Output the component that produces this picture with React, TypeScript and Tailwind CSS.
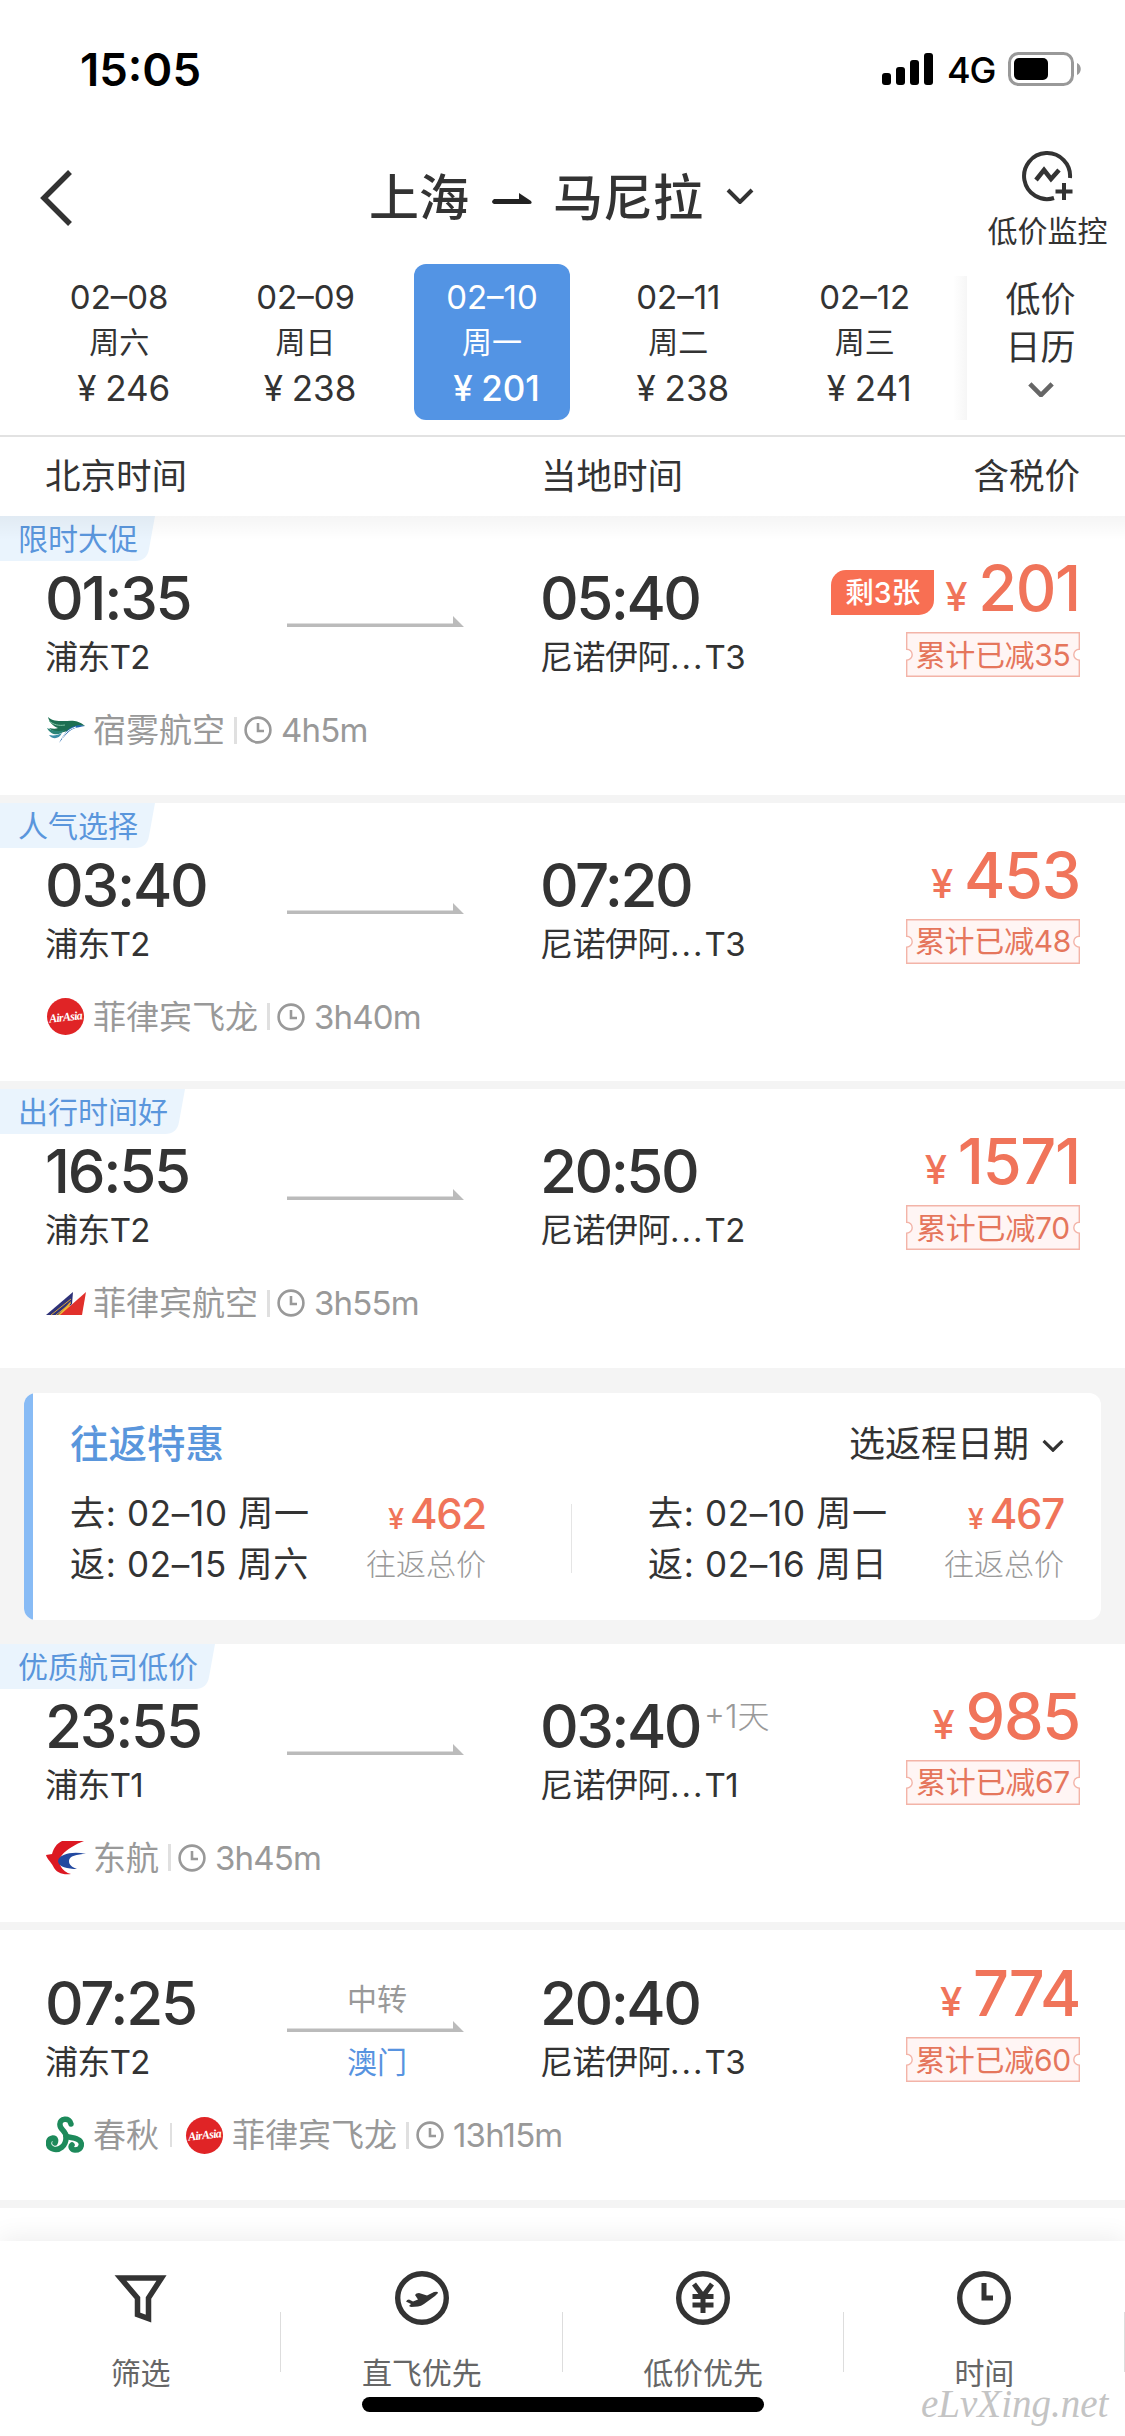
import React from 'react';
import clsx from 'clsx';

type LogoName = 'cebu' | 'airasia' | 'pal' | 'eastern' | 'spring';

interface Flight {
  tag?: string;
  tagWidth?: number;
  depart: string;
  from: string;
  arrive: string;
  to: string;
  nextDay?: string;
  via?: string;
  left?: string;
  price: string;
  saved: string;
  airlines: { logo: LogoName; name: string }[];
  duration: string;
}

const days = [
  { date: '02–08', week: '周六', price: '246' },
  { date: '02–09', week: '周日', price: '238' },
  { date: '02–10', week: '周一', price: '201', active: true },
  { date: '02–11', week: '周二', price: '238' },
  { date: '02–12', week: '周三', price: '241' },
];

const topFlights: Flight[] = [
  {
    tag: '限时大促', tagWidth: 155,
    depart: '01:35', from: '浦东T2', arrive: '05:40', to: 'T3',
    left: '剩3张', price: '201', saved: '35',
    airlines: [{ logo: 'cebu', name: '宿雾航空' }], duration: '4h5m',
  },
  {
    tag: '人气选择', tagWidth: 155,
    depart: '03:40', from: '浦东T2', arrive: '07:20', to: 'T3',
    price: '453', saved: '48',
    airlines: [{ logo: 'airasia', name: '菲律宾飞龙' }], duration: '3h40m',
  },
  {
    tag: '出行时间好', tagWidth: 185,
    depart: '16:55', from: '浦东T2', arrive: '20:50', to: 'T2',
    price: '1571', saved: '70',
    airlines: [{ logo: 'pal', name: '菲律宾航空' }], duration: '3h55m',
  },
];

const moreFlights: Flight[] = [
  {
    tag: '优质航司低价', tagWidth: 215,
    depart: '23:55', from: '浦东T1', arrive: '03:40', to: 'T1', nextDay: '+1天',
    price: '985', saved: '67',
    airlines: [{ logo: 'eastern', name: '东航' }], duration: '3h45m',
  },
  {
    depart: '07:25', from: '浦东T2', arrive: '20:40', to: 'T3', via: '澳门',
    price: '774', saved: '60',
    airlines: [{ logo: 'spring', name: '春秋' }, { logo: 'airasia', name: '菲律宾飞龙' }],
    duration: '13h15m',
  },
];

const roundTrips = [
  { go: '02–10 周一', back: '02–15 周六', price: '462' },
  { go: '02–10 周一', back: '02–16 周日', price: '467' },
];

function Chevron({ className, width = 4 }: { className: string; width?: number }) {
  return (
    <svg viewBox="0 0 28 16" className={className} fill="none" stroke="currentColor" strokeWidth={width}>
      <path d="M2 2l12 12L26 2" />
    </svg>
  );
}

function Logo({ name }: { name: LogoName }) {
  switch (name) {
    case 'cebu':
      return (
        <svg viewBox="0 0 40 42" className="h-[42px] w-10">
          <path d="M2 8c4 4 9 4 15 4 8 0 14-2 22 5-7-1-12 1-16 4-6 4-15 3-20-2 4 1 7 1 9 0C7 17 3 13 2 8z" fill="#1d6f52" />
          <path d="M3 12c5 4 10 5 16 4" fill="none" stroke="#7fc4a4" strokeWidth="1" />
          <path d="M1 19c6 3 12 4 18 2-5 6-14 6-18-2z" fill="#2b8478" />
          <path d="M3 26c5 1 9 0 13-2-3 6-9 7-13 2z" fill="#3c8fa8" />
          <path d="M39 17c-8-2-15 1-19 6-3 4-5 7-7 11 5-6 9-12 14-14 4-2 8-2 12-3z" fill="#2166ae" />
          <path d="M30 18c-7 2-11 6-14 12" fill="none" stroke="#fff" strokeWidth="1" />
        </svg>
      );
    case 'airasia':
      return (
        <span className="flex h-[37px] w-10 items-center pl-[1px]">
          <span className="flex size-[37px] items-center justify-center rounded-full bg-[#e02426]">
            <span className="-rotate-6 font-['Liberation_Serif',serif] text-[12px] leading-none font-bold tracking-[-0.06em] text-white italic">
              AirAsia
            </span>
          </span>
        </span>
      );
    case 'pal':
      return (
        <svg viewBox="0 0 40 42" className="h-[42px] w-10">
          <path d="M0 33L27 10l-1 12-12 11z" fill="#2e3278" />
          <path d="M12 33l13-14-2 7-7 7z" fill="#f2b632" />
          <path d="M5 33l20-16M10 33l15-12" stroke="#d9a63c" strokeWidth="1" />
          <path d="M14 33l26-23-4 23z" fill="#e1302b" />
        </svg>
      );
    case 'eastern':
      return (
        <svg viewBox="0 0 40 42" className="h-[42px] w-10">
          <path d="M16 4h22c-8 3-17 8-22 14-6 7 0 17 9 19-8 1-15-1-18-8-2-4-6-7-7-11l6-1c2-6 4-10 10-13z" fill="#dc1822" />
          <path d="M40 17c-9 0-17 2-17 7 0 4 3 6 8 8-9 0-19-2-19-8 1-7 15-10 28-7z" fill="#2349a0" />
        </svg>
      );
    case 'spring':
      return (
        <svg viewBox="0 0 40 42" className="h-[42px] w-10" fill="none" stroke="#1d8a5b" strokeWidth="5.500" strokeLinecap="round">
          <path d="M25 10c-1-7-12-6-11 1 0 5 7 6 6 13 0 8-7 13-13 11-6-2-6-10 0-11 3 0 3 3 2 5" />
          <path d="M20 22c3 2 7 1 11 3 7 3 5 11-2 11-3 0-5-3-3-5" />
        </svg>
      );
  }
}

function ClockSmall() {
  return (
    <svg viewBox="0 0 28 28" className="size-7" fill="none" stroke="#999" strokeWidth="2.6">
      <circle cx="14" cy="14" r="12.4" />
      <path d="M14 7v8h6" />
    </svg>
  );
}

function Tag({ label, width }: { label: string; width: number }) {
  return (
    <div className="relative flex h-[45px] items-center pl-[18px]" style={{ width }}>
      <svg className="absolute inset-0" width={width} height="45" fill="#eaf4fd">
        <path d={`M0 0H${width}L${width - 6} 33Q${width - 8} 45 ${width - 20} 45H0z`} />
      </svg>
      <span className="relative pt-[2px] text-[30px] leading-[45px] whitespace-nowrap text-[#5a96dc]">{label}</span>
    </div>
  );
}

function Coupon({ amount }: { amount: string }) {
  return (
    <div className="relative mt-[13px] flex h-[45px] w-[174px] items-center justify-center">
      <svg className="absolute inset-0" width="174" height="45" viewBox="0 0 174 45" fill="#fff5f4" stroke="#f3b4a8" strokeWidth="1.4">
        <path d="M.7.7h172.600v16.500a5.500 5.500 0 0 0 0 11v16H.7v-16a5.500 5.500 0 0 0 0-11z" />
      </svg>
      <span className="relative pt-[1px] text-[30px] leading-[47px] tracking-[-0.01em] whitespace-nowrap text-[#e5765c]">
        累计已减{amount}
      </span>
    </div>
  );
}

function FlightCard({ flight }: { flight: Flight }) {
  return (
    <section className="bg-white pb-[15.500px]">
      {flight.tag ? <Tag label={flight.tag} width={flight.tagWidth!} /> : <div className="h-[36px]" />}
      <div className="flex h-[120px] pr-[45px] pl-[45px]">
        <div className="w-[242px]">
          <div className="h-[72px] text-[60px] leading-[74px] font-medium tracking-[-0.037em]">{flight.depart}</div>
          <div className="h-[48px] text-[33px] leading-[49px] tracking-[-0.02em]">{flight.from}</div>
        </div>
        <div className="flex w-[177px] flex-col items-center pt-[11px] text-[30px] leading-[44px]">
          <div className="h-[44px] pl-[3px] text-[#999]">{flight.via && '中转'}</div>
          <svg viewBox="0 0 177 11" className="h-[11px] w-[177px]" fill="#bbb">
            <path d="M0 7.500h166V0l11 11H0z" />
          </svg>
          <div className="mt-[8px] pl-[3px] text-[#5793e0]">{flight.via}</div>
        </div>
        <div className="ml-[76px] flex-1">
          <div className="flex h-[72px] text-[60px] leading-[74px] font-medium tracking-[-0.042em]">
            {flight.arrive}
            {flight.nextDay && (
              <span className="ml-[4px] text-[32px] leading-[56px] font-light tracking-normal text-[#999]">{flight.nextDay}</span>
            )}
          </div>
          <div className="h-[48px] text-[33px] leading-[49px] tracking-[-0.015em] whitespace-nowrap">
            尼诺伊阿<span className="tracking-[0.06em]">...</span>
            {flight.to}
          </div>
        </div>
        <div className="flex flex-col items-end">
          <div className="flex h-[58px] items-center pt-[5px]">
            {flight.left && (
              <span className="mr-[11px] h-[45px] rounded-tl-[15px] rounded-br-[15px] bg-[#f86f53] px-[14px] text-[28.500px] leading-[45px] font-medium whitespace-nowrap text-white">
                {flight.left}
              </span>
            )}
            <span className="flex items-baseline text-[63px] leading-[54px] font-medium tracking-[-0.02em] whitespace-nowrap text-[#f0745a]">
              <span className="w-[33px] text-[40px]">¥</span>
              {flight.price}
            </span>
          </div>
          <Coupon amount={flight.saved} />
        </div>
      </div>
      <div className="flex h-[98px] items-center pl-[46px] text-[33px] text-[#999]">
        {flight.airlines.map((a, i) => (
          <div key={a.name} className="flex items-center">
            {i > 0 && <span className="mr-[13px] h-[24px] w-[2px] bg-[#e0e0e0]" />}
            <Logo name={a.logo} />
            <span className={clsx('ml-[7px] leading-[46px]', i < flight.airlines.length - 1 ? 'mr-[11px]' : 'mr-[9px]')}>{a.name}</span>
          </div>
        ))}
        <span className="mr-[7px] h-[27px] w-[3px] bg-[#e0e0e0]" />
        <ClockSmall />
        <span className="ml-[9px] leading-[48px] tracking-[-0.025em]">{flight.duration}</span>
      </div>
    </section>
  );
}

function StatusBar() {
  return (
    <div className="flex h-[138px] items-center justify-between pr-[43px] pl-[80px] text-black">
      <span className="pt-[2px] text-[45.500px] leading-none font-semibold">15:05</span>
      <div className="flex items-center">
        <svg viewBox="0 0 51 32" className="h-8 w-[51px]">
          <rect x="0" y="20" width="9" height="12" rx="3" />
          <rect x="14" y="14" width="9" height="18" rx="3" />
          <rect x="28" y="7" width="9" height="25" rx="3" />
          <rect x="42" y="0" width="9" height="32" rx="3" />
        </svg>
        <span className="ml-[14px] w-[61px] pt-[2px] text-[36px] leading-none font-medium tracking-[-0.03em]">4G</span>
        <svg viewBox="0 0 74 34" className="h-[34px] w-[74px]">
          <rect x="1.500" y="1.500" width="63" height="31" rx="9" fill="none" stroke="#999" strokeWidth="3" />
          <rect x="6" y="6" width="34" height="22" rx="5" />
          <path d="M69 11c5 2 5 10 0 12z" fill="#999" />
        </svg>
      </div>
    </div>
  );
}

function TitleBar() {
  return (
    <header className="flex h-[126px] items-start pl-[39px]">
      <svg viewBox="0 0 34 56" className="mt-[32px] h-[56px] w-[34px]" fill="none" stroke="#333" strokeWidth="5.500">
        <path d="M31 2L5 28l26 26" />
      </svg>
      <div className="mt-[30px] ml-[296px] flex h-[60px] w-[620px] items-center text-[50px] leading-[60px] font-medium">
        上海
        <svg viewBox="0 0 40 11" className="ml-[23px] h-[11px] w-10" fill="#222">
          <path d="M2 6h25V0l12 8q2 3-2 3H2q-4-2 0-5z" />
        </svg>
        <span className="ml-[21px]">马尼拉</span>
        <Chevron className="mb-1 ml-[22px] h-4 w-[30px]" />
      </div>
      <div className="flex w-[117px] flex-col items-center pt-[12px]">
        <svg viewBox="0 0 52 52" className="size-[52px]" fill="none" stroke="#333" strokeWidth="4">
          <path d="M32 48A23 23 0 1 1 48 28" />
          <path d="M14 30l8-10 7 9 8-9" strokeWidth="4.500" />
          <path d="M42 33v17M33.500 41.500h17" strokeWidth="4" />
        </svg>
        <span className="mt-[8px] text-[30px] leading-[42px] whitespace-nowrap">低价监控</span>
      </div>
    </header>
  );
}

function DateStrip() {
  return (
    <div className="flex h-[173px] border-b-2 border-[#e2e2e2] pl-[26px]">
      <div className="flex w-[941px]">
        {days.map((d) => (
          <div key={d.date} className="flex w-[186.400px] justify-center">
            <div
              className={clsx(
                'flex h-[156px] w-[156px] flex-col items-center rounded-xl pt-[11px]',
                d.active && 'bg-[#5394e4] text-white',
              )}
            >
              <span className="text-[33px] leading-[45px]">{d.date}</span>
              <span className="text-[30px] leading-[44px]">{d.week}</span>
              <span className={clsx('ml-[9px] flex text-[35px] leading-[48px] whitespace-nowrap', d.active && 'font-medium')}>
                <span className="w-[28px]">¥</span>
                {d.price}
              </span>
            </div>
          </div>
        ))}
      </div>
      <div className="mt-[12px] -ml-[14px] h-[144px] w-[14px] bg-linear-to-r from-white to-[#f6f6f6]" />
      <div className="flex flex-1 flex-col items-center pt-[11px] pr-[11px] text-[35px] leading-[48px]">
        <span>低价</span>
        <span>日历</span>
        <Chevron className="mt-[11px] h-[15px] w-[26px] text-[#666]" width={5} />
      </div>
    </div>
  );
}

function RoundTripCard() {
  return (
    <section className="bg-[#f4f4f4] px-[24px] pt-[25px] pb-[24px]">
      <div className="h-[227px] overflow-hidden rounded-xl bg-white">
        <div className="h-full border-l-[9px] border-[#88bbf5] pr-[37px] pl-[37px]">
          <div className="flex h-[95px] items-center justify-between pt-[7px]">
            <h2 className="text-[38.500px] leading-[56px] font-medium text-[#5a96dc]">往返特惠</h2>
            <div className="flex items-center text-[36px]">
              选返程日期
              <Chevron className="mt-1 ml-[13px] h-[13px] w-[22px]" />
            </div>
          </div>
          <div className="flex items-center justify-between">
            {roundTrips.map((trip, i) => (
              <React.Fragment key={trip.price}>
                {i > 0 && <span className="mr-[-8px] h-[69px] w-px bg-[#e5e5e5]" />}
                <div className="flex w-[416px] justify-between text-[35px] leading-[51px] whitespace-nowrap">
                  <div className="tracking-[0.02em]">
                    <div>去: {trip.go}</div>
                    <div>返: {trip.back}</div>
                  </div>
                  <div className="flex flex-col items-end">
                    <div className="flex h-[51px] items-baseline text-[42px] leading-[51px] font-medium tracking-[-0.03em] text-[#f0745a]">
                      <span className="w-[22px] text-[29px]">¥</span>
                      {trip.price}
                    </div>
                    <div className="h-[51px] text-[30px] font-light text-[#999]">往返总价</div>
                  </div>
                </div>
              </React.Fragment>
            ))}
          </div>
        </div>
      </div>
    </section>
  );
}

const tabs = [
  {
    label: '筛选',
    icon: (
      <path d="M6.500 7h41L34.500 27v20.500l-11-4V27z" strokeWidth="5.500" />
    ),
  },
  {
    label: '直飞优先',
    icon: (
      <>
        <circle cx="27" cy="27" r="24.300" strokeWidth="5.400" />
        <path d="M11 30.500q1-2 3-2l4 2 5-2-3-4.500q1-2 4-2l8 2.500 7-3.500q4-1 4 1l-3 3-11 8q-3 2-6 2.500l-7 .5-2-1 2-2z" fill="#333" stroke="none" />
      </>
    ),
  },
  {
    label: '低价优先',
    icon: (
      <>
        <circle cx="27" cy="27" r="24.300" strokeWidth="5.400" />
        <path d="M18 13l9 12 9-12M27 24v18M16.500 25.500h21M16.500 34h21" strokeWidth="5" />
      </>
    ),
  },
  {
    label: '时间',
    icon: (
      <>
        <circle cx="27" cy="27" r="24.300" strokeWidth="5.400" />
        <path d="M27 12v15h9" strokeWidth="5" />
      </>
    ),
  },
];

function BottomBar() {
  return (
    <nav className="relative h-[195px] bg-white shadow-[0_-4px_24px_rgba(0,0,0,0.07)]">
      <div className="flex">
        {tabs.map((t) => (
          <div key={t.label} className="flex w-[281.250px] items-end">
            <div className="flex flex-1 flex-col items-center pt-[30px] pl-px">
              <svg viewBox="0 0 54 54" className="size-[54px]" fill="none" stroke="#333">
                {t.icon}
              </svg>
              <span className="mt-[26px] text-[30px] leading-[44px] text-[#666]">{t.label}</span>
            </div>
            <span className="mb-[23px] h-[60px] w-px bg-[#ddd]" />
          </div>
        ))}
      </div>
      <div className="absolute top-[156px] left-[362px] h-[15px] w-[402px] rounded-full bg-black" />
      <div className="absolute top-[144px] left-[921px] font-['Liberation_Serif',serif] text-[39px] leading-[38px] text-[#c4c4c4] italic">
        eLvXing.net
      </div>
    </nav>
  );
}

export default function App() {
  return (
    <div className="flex h-[2436px] w-[1125px] flex-col overflow-hidden bg-white font-['Inter','Noto_Sans_CJK_SC',sans-serif] text-[#333]">
      <StatusBar />
      <TitleBar />
      <DateStrip />
      <div className="flex h-[79px] items-center pt-[1px] pr-[45px] pl-[45px] text-[35.500px]">
        <span className="w-[496px]">北京时间</span>
        <span className="flex-1">当地时间</span>
        <span>含税价</span>
      </div>
      <main className="relative flex h-[1725px] flex-col gap-[8px] bg-[#f4f4f4]">
        {topFlights.map((f) => (
          <FlightCard key={f.price} flight={f} />
        ))}
        <div className="-mt-[8px] -mb-[8px]">
          <RoundTripCard />
        </div>
        {moreFlights.map((f) => (
          <FlightCard key={f.price} flight={f} />
        ))}
        <div className="flex-1 bg-white" />
        <div className="absolute inset-x-0 top-0 h-[24px] bg-linear-to-b from-black/4 to-transparent" />
      </main>
      <BottomBar />
    </div>
  );
}
